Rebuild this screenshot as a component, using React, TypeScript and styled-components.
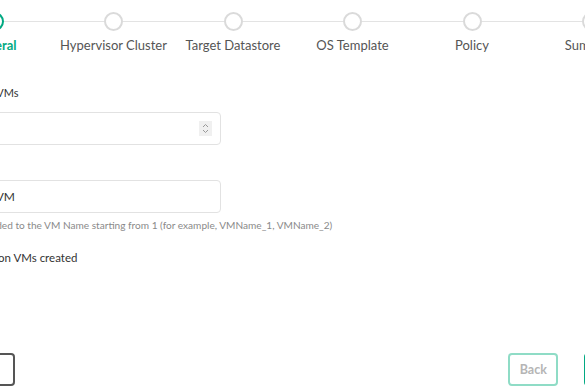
import React from "react";
import styled, { createGlobalStyle } from "styled-components";

const Global = createGlobalStyle`
  html, body { margin: 0; padding: 0; background: #ffffff; }
  body { overflow: hidden; font-family: Lato, "Open Sans", sans-serif; }
  * { box-sizing: border-box; }
`;

const Page = styled.div`
  width: 585px;
  height: 390px;
  overflow: hidden;
`;

const Frame = styled.div`
  width: 717px;
  height: 390px;
  margin-left: -65.75px;
  display: flex;
  flex-direction: column;
`;

const Stepper = styled.div`
  display: grid;
  grid-template-columns: repeat(6, 119.5px);
  padding-top: 12px;
`;

const Step = styled.div`
  display: flex;
  flex-direction: column;
  align-items: center;
`;

const Track = styled.div`
  width: 100%;
  display: flex;
  align-items: center;
`;

const Line = styled.div<{ $hidden?: boolean }>`
  flex: 1;
  height: 1px;
  background: ${(p) => (p.$hidden ? "transparent" : "#e3e3e3")};
`;

const Dot = styled.div<{ $active?: boolean }>`
  width: 19px;
  height: 19px;
  border-radius: 50%;
  border: 2px solid ${(p) => (p.$active ? "#01a982" : "#dadada")};
  background: #fff;
`;

const StepLabel = styled.div<{ $active?: boolean }>`
  margin-top: 6px;
  font-size: 13px;
  line-height: 16px;
  white-space: nowrap;
  color: ${(p) => (p.$active ? "#01a982" : "#555555")};
  font-weight: ${(p) => (p.$active ? 700 : 400)};
`;

const Form = styled.div`
  padding-left: 7.75px;
  margin-top: 33px;
  display: flex;
  flex-direction: column;
`;

const Field = styled.div<{ $last?: boolean }>`
  display: flex;
  flex-direction: column;
  margin-bottom: ${(p) => (p.$last ? "0" : "9px")};
`;

const Label = styled.div`
  font-size: 11px;
  line-height: 14px;
  color: #333;
  margin-bottom: 12px;
`;

const InputBox = styled.div`
  width: 279px;
  height: 33px;
  border: 1px solid #e2e2e2;
  border-radius: 4px;
  display: flex;
  align-items: center;
  padding: 0 8px 0 8px;
  font-size: 12px;
  color: #333;
`;

const Value = styled.span`
  flex: 1;
`;

const Spin = styled.div`
  width: 13px;
  height: 15px;
  background: #f0f0f0;
  display: flex;
  align-items: center;
  justify-content: center;
`;

const Help = styled.div`
  margin-top: 6px;
  font-size: 10.1px;
  line-height: 13px;
  color: #8a8a8a;
  white-space: nowrap;
`;

const CheckRow = styled.div`
  margin-top: 18px;
  font-size: 11.5px;
  line-height: 16px;
  color: #333;
  display: flex;
  align-items: center;
  gap: 5px;
`;

const Box = styled.div`
  width: 16px;
  height: 16px;
  border: 2px solid #999;
  border-radius: 3px;
`;

const Footer = styled.div`
  margin-top: auto;
  padding: 0 17px 4px 7.75px;
  display: flex;
  justify-content: space-between;
  align-items: flex-end;
`;

const Actions = styled.div`
  display: flex;
  gap: 26px;
`;

const Button = styled.button<{ $kind: "plain" | "disabled" | "primary" }>`
  height: 33px;
  padding: 0;
  border-radius: 4px;
  font-family: Lato, "Open Sans", sans-serif;
  font-size: 12.5px;
  font-weight: 700;
  background: ${(p) => (p.$kind === "primary" ? "#01a982" : "#fff")};
  border: 2px solid
    ${(p) =>
      p.$kind === "plain" ? "#555" : p.$kind === "disabled" ? "#8fdcc6" : "#01a982"};
  color: ${(p) =>
    p.$kind === "plain" ? "#333" : p.$kind === "disabled" ? "#b5b5b5" : "#fff"};
  width: ${(p) => (p.$kind === "plain" ? "73px" : "50px")};
`;

const steps = [
  "General",
  "Hypervisor Cluster",
  "Target Datastore",
  "OS Template",
  "Policy",
  "Summary",
];

function SpinIcon() {
  return (
    <svg width="9" height="13" viewBox="0 0 9 13" fill="none">
      <path d="M2 5 L4.5 2.5 L7 5" stroke="#999" strokeWidth="1" />
      <path d="M2 8 L4.5 10.5 L7 8" stroke="#999" strokeWidth="1" />
    </svg>
  );
}

export default function App() {
  return (
    <Page>
      <Global />
      <Frame>
        <Stepper>
          {steps.map((s, i) => (
            <Step key={s}>
              <Track>
                <Line $hidden={i === 0} />
                <Dot $active={i === 0} />
                <Line $hidden={i === steps.length - 1} />
              </Track>
              <StepLabel $active={i === 0}>{s}</StepLabel>
            </Step>
          ))}
        </Stepper>
        <Form>
          <Field>
            <Label>Number of VMs</Label>
            <InputBox>
              <Value></Value>
              <Spin>
                <SpinIcon />
              </Spin>
            </InputBox>
          </Field>
          <Field $last>
            <Label>VM Name</Label>
            <InputBox>
              <Value>NewTestVM</Value>
            </InputBox>
          </Field>
          <Help>
            Index appended to the VM Name starting from 1 (for example, VMName_1, VMName_2)
          </Help>
          <CheckRow>
            <Box />
            Power on VMs created
          </CheckRow>
        </Form>
        <Footer>
          <Button $kind="plain">Cancel</Button>
          <Actions>
            <Button $kind="disabled">Back</Button>
            <Button $kind="primary">Next</Button>
          </Actions>
        </Footer>
      </Frame>
    </Page>
  );
}
